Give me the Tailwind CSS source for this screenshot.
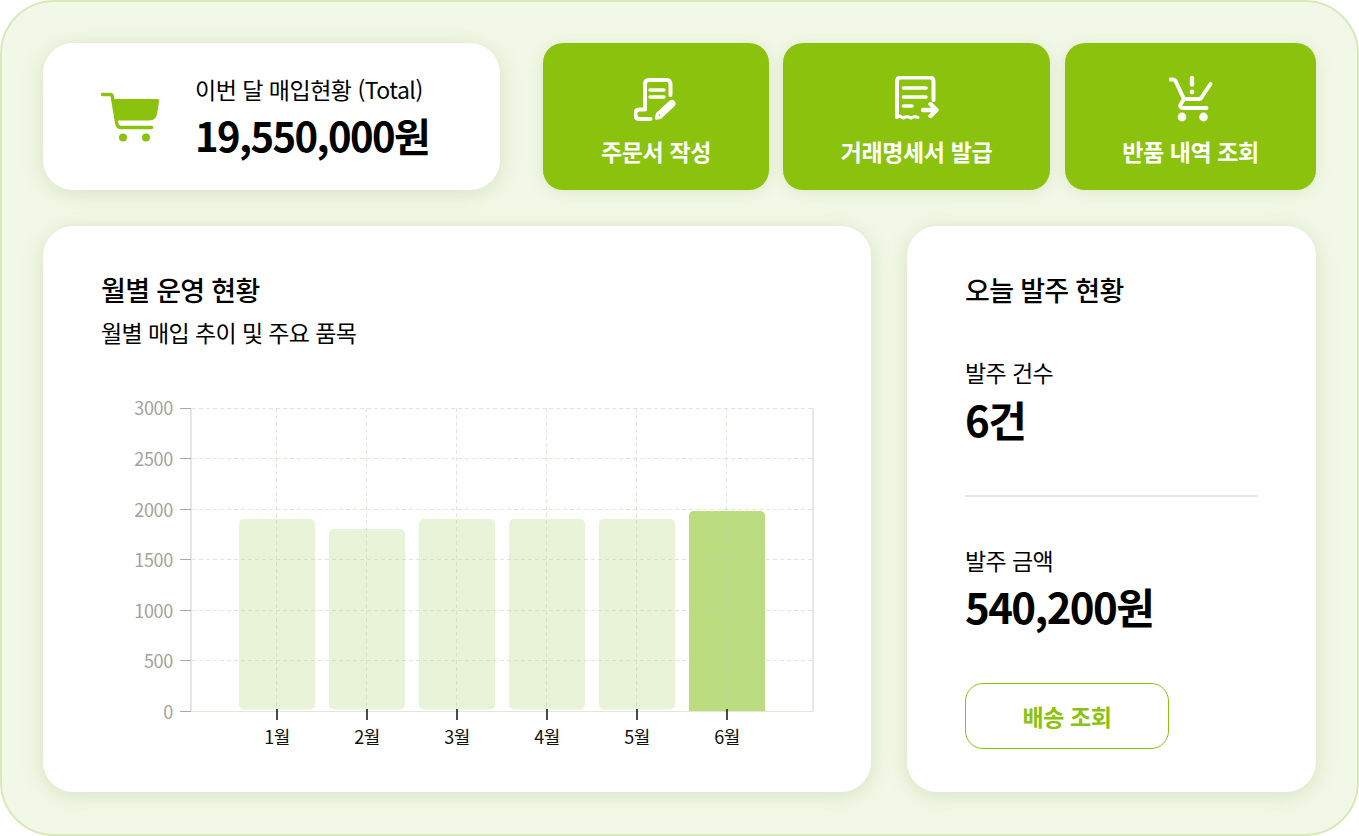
<!DOCTYPE html>
<html lang="ko">
<head>
  <meta charset="UTF-8" />
  <meta name="viewport" content="width=device-width, initial-scale=1.0"/>
  <script src="https://cdn.jsdelivr.net/npm/@tailwindcss/browser@4"></script>
  <title>매입현황</title>
</head>
<body class="bg-white font-['Noto_Sans_CJK_KR','Noto_Sans',sans-serif] text-black">
  <main class="w-[1359px] h-[836px] rounded-[54px] border-2 border-[#d9e9bb] bg-[#f2f8e7] pt-[41px] pl-[41px] overflow-hidden">
    <!-- top row -->
    <section class="flex h-[147px]">
      <div class="w-[457px] rounded-[30px] bg-white shadow-[0_3px_22px_rgba(110,140,50,0.2)] flex items-center">
        <svg class="ml-[57px] w-[62px] h-[52px] shrink-0" viewBox="100 90 62 52" fill="none">
          <path d="M102.500 93.500H110.500C111.500 93.500 112 94 112.200 95L116.500 121C116.900 124.500 118 126.500 121 126.500H151.500" stroke="#8bc20d" stroke-width="3.400" stroke-linecap="round"/>
          <path d="M112.500 98H157.500C158.600 98 159.200 98.700 159 100L157.500 110.500C156.800 116.500 154.500 119.500 149 119.500H116.500Z" fill="#8bc20d"/>
          <circle cx="123" cy="136.500" r="4" fill="#8bc20d"/>
          <circle cx="146" cy="136.500" r="4" fill="#8bc20d"/>
        </svg>
        <div class="ml-[33px] mt-[2px]">
          <p class="text-[23px] leading-[30px] tracking-[-0.5px] font-normal">이번 달 매입현황 (Total)</p>
          <p class="mt-[4px] text-[40px] leading-[54px] tracking-[-1.6px] font-bold">19,550,000원</p>
        </div>
      </div>

      <button class="ml-[43px] w-[226px] rounded-[20px] bg-[#8bc20d] text-white flex flex-col items-center shadow-[0_2px_16px_rgba(110,140,50,0.15)]">
        <svg class="mt-[34px] w-[44px] h-[44px]" viewBox="635 76 44 44" fill="none" stroke="white" stroke-width="4" stroke-linecap="round" stroke-linejoin="round">
          <path d="M646 108V83C646 80.500 647.500 79 650 79H668C670 79 671.500 80.500 671.500 83V94"/>
          <path d="M646 108.500H640.500C638 108.500 636.500 110 636.500 112.500V114C636.500 116.500 638 118 640.500 118H651.500"/>
          <path d="M651 89H665M651 96H665" stroke-width="3.400"/>
          <path d="M657.500 117L658.500 113L671 101.500C672.500 100.200 673.500 100.300 674.300 101.200C675.200 102.300 675 103.300 674 104.300L661.500 116Z" stroke-width="3.400" fill="white"/>
          <circle cx="660.500" cy="114" r="0.800" fill="#8bc20d" stroke="none"/>
        </svg>
        <span class="mt-[14px] text-[23px] leading-[32px] tracking-[-0.4px] font-bold">주문서 작성</span>
      </button>

      <button class="ml-[14px] w-[267px] rounded-[20px] bg-[#8bc20d] text-white flex flex-col items-center shadow-[0_2px_16px_rgba(110,140,50,0.15)]">
        <svg class="mt-[33px] w-[44px] h-[45px]" viewBox="895 76 44 45" fill="none" stroke="white" stroke-width="4" stroke-linecap="round" stroke-linejoin="round">
          <path d="M897 116V81C897 78.800 898.500 77.500 900.500 77.500H930C932 77.500 933.500 78.800 933.500 81V100"/>
          <path d="M896.500 117.500L900 116L903 118L907 116.500L911 118L915 116.500L918 117.500" stroke-width="3"/>
          <path d="M903.500 88H926M903.500 97H926M903.500 106H912" stroke-width="3.600"/>
          <path d="M923 110H936M930.500 104L936.500 110L930.500 116" stroke-width="4.400"/>
        </svg>
        <span class="mt-[14px] text-[23px] leading-[32px] tracking-[-0.4px] font-bold">거래명세서 발급</span>
      </button>

      <button class="ml-[15px] w-[251px] rounded-[20px] bg-[#8bc20d] text-white flex flex-col items-center shadow-[0_2px_16px_rgba(110,140,50,0.15)]">
        <svg class="mt-[33px] w-[44px] h-[46px]" viewBox="1169 76 44 46" fill="none" stroke="white" stroke-width="4" stroke-linecap="round" stroke-linejoin="round">
          <path d="M1170.500 79.500H1173C1174 79.500 1175 80 1175.500 81L1184 99H1199C1200 99 1201 98.500 1201.500 97.500L1210.500 84"/>
          <path d="M1184 99L1180.500 104.500C1179.500 106.500 1181 108 1183 108H1206.500"/>
          <path d="M1192 78V84.500" stroke-width="4.400"/>
          <circle cx="1192" cy="92" r="2.400" fill="white" stroke="none"/>
          <circle cx="1182" cy="117" r="4.400" fill="white" stroke="none"/>
          <circle cx="1203.500" cy="117" r="4.400" fill="white" stroke="none"/>
        </svg>
        <span class="mt-[13px] text-[23px] leading-[32px] tracking-[-0.4px] font-bold">반품 내역 조회</span>
      </button>
    </section>

    <!-- bottom row -->
    <section class="flex mt-[36px] h-[566px]">
      <div class="w-[828px] rounded-[30px] bg-white shadow-[0_3px_22px_rgba(110,140,50,0.2)] pt-[46px]">
        <h2 class="ml-[58px] text-[27px] leading-[36px] tracking-[-0.7px] font-medium">월별 운영 현황</h2>
        <p class="ml-[58px] mt-[9px] text-[23px] leading-[30px] tracking-[-0.6px] font-normal">월별 매입 추이 및 주요 품목</p>
        <svg class="block mt-[43px] ml-[77px] font-['Noto_Sans_CJK_KR','Noto_Sans',sans-serif]" width="720" height="370" viewBox="120 390 720 370">
          <rect x="239" y="519" width="76" height="190.500" rx="5" fill="#e9f3d7"/>
          <rect x="329" y="529" width="76" height="180.500" rx="5" fill="#e9f3d7"/>
          <rect x="419" y="519" width="76" height="190.500" rx="5" fill="#e9f3d7"/>
          <rect x="509" y="519" width="76" height="190.500" rx="5" fill="#e9f3d7"/>
          <rect x="599" y="519" width="76" height="190.500" rx="5" fill="#e9f3d7"/>
          <path d="M689 711V516C689 513 691 511 694 511H760C763 511 765 513 765 516V711Z" fill="#bcdc80"/>
          <g stroke="#c8cfb8" stroke-opacity="0.5" stroke-dasharray="4 3">
            <path d="M192 408.500H813M192 458.500H813M192 509.500H813M192 559.500H813M192 610.500H813M192 660.500H813"/>
            <path d="M276.500 408V710M366.500 408V710M456.500 408V710M546.500 408V710M636.500 408V710M726.500 408V710"/>
          </g>
          <path d="M191 408V711.500M813 408V711.500" stroke="#e6e6e6" stroke-width="2"/>
          <path d="M191 711.500H814" stroke="#e4e6d8"/>
          <g stroke="#a9a9a3" stroke-width="1">
            <path d="M180 408.500H191M180 458.500H191M180 509.500H191M180 559.500H191M180 610.500H191M180 660.500H191M180 711.500H191"/>
          </g>
          <g stroke="#111" stroke-width="1.500">
            <path d="M277 709V720M367 709V720M457 709V720M547 709V720M637 709V720M727 709V720"/>
          </g>
          <g fill="#a3a39d" font-size="18" text-anchor="end" letter-spacing="-0.3">
            <text x="173" y="414.500">3000</text>
            <text x="173" y="466">2500</text>
            <text x="173" y="516.500">2000</text>
            <text x="173" y="567">1500</text>
            <text x="173" y="617.500">1000</text>
            <text x="173" y="668">500</text>
            <text x="173" y="719">0</text>
          </g>
          <g fill="#111" font-size="18" text-anchor="middle" letter-spacing="-0.5">
            <text x="277" y="743.500">1월</text>
            <text x="367" y="743.500">2월</text>
            <text x="457" y="743.500">3월</text>
            <text x="547" y="743.500">4월</text>
            <text x="637" y="743.500">5월</text>
            <text x="727" y="743.500">6월</text>
          </g>
        </svg>
      </div>

      <div class="ml-[36px] w-[409px] rounded-[30px] bg-white shadow-[0_3px_22px_rgba(110,140,50,0.2)] pt-[46px] px-[58px]">
        <h2 class="text-[27px] leading-[36px] tracking-[-0.7px] font-medium">오늘 발주 현황</h2>
        <p class="mt-[49px] text-[23px] leading-[30px] tracking-[-0.6px]">발주 건수</p>
        <p class="mt-[2px] text-[42px] leading-[60px] tracking-[-1.6px] font-bold">6건</p>
        <div class="mt-[46px] h-[2px] bg-[#e8e8e8]"></div>
        <p class="mt-[48px] text-[23px] leading-[30px] tracking-[-0.6px]">발주 금액</p>
        <p class="mt-[1px] text-[42px] leading-[60px] tracking-[-1.6px] font-bold">540,200원</p>
        <button class="mt-[47px] w-[204px] h-[66px] rounded-[18px] border border-[#8bc20d] text-[#8bc20d] text-[23px] tracking-[-0.4px] font-bold">배송 조회</button>
      </div>
    </section>
  </main>
</body>
</html>
